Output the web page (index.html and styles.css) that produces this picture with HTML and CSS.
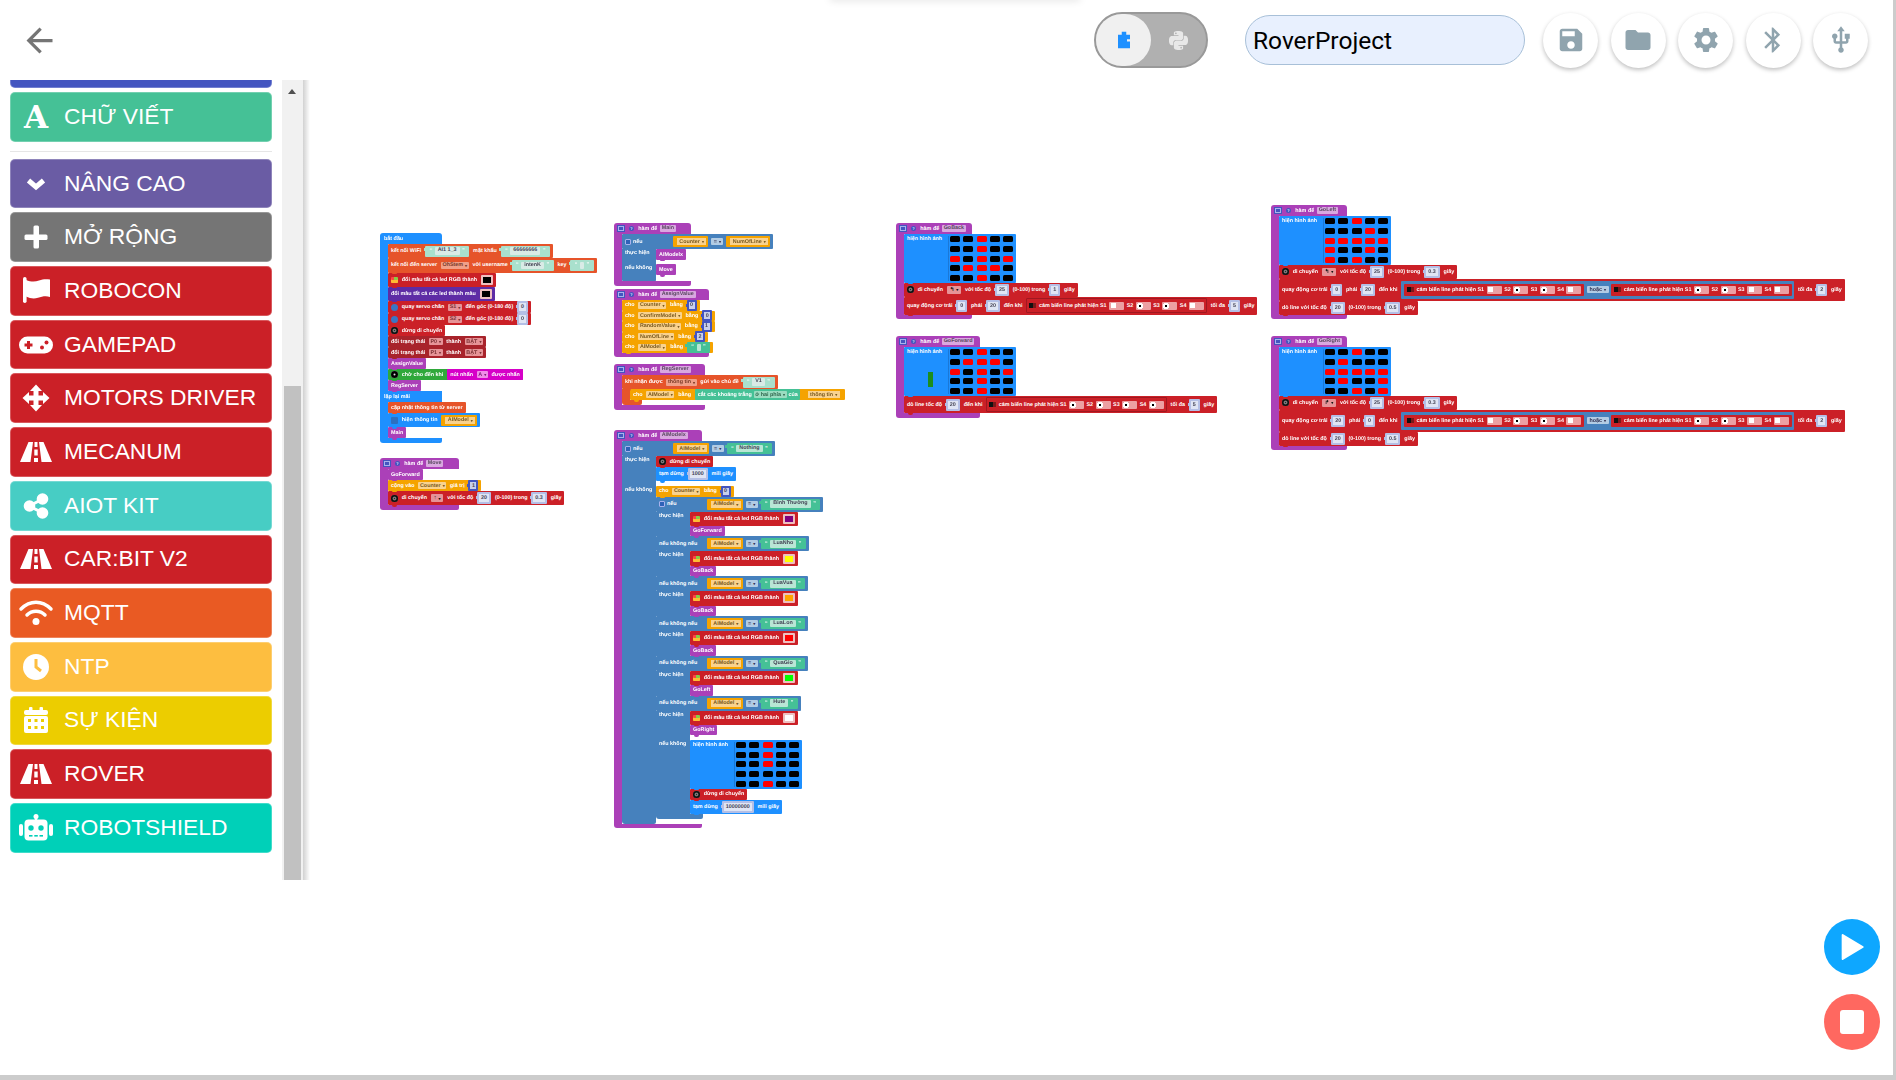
FILE: index.html
```html
<!DOCTYPE html>
<html>
<head>
  <meta charset="utf-8">
  <title>RoverProject</title>
  <link rel="stylesheet" href="styles.css">
</head>
<body>
  <div class="top-hint"></div>

  <header class="topbar">
    <button class="back-btn">
      <svg viewBox="0 0 24 24"><path d="M20 11H7.83l5.59-5.59L12 4l-8 8 8 8 1.41-1.41L7.83 13H20v-2z"/></svg>
    </button>
    <div class="mode-toggle">
      <div class="mode-knob">
        <svg viewBox="0 0 24 24"><path d="M9 1h6v4h5v6h-4v3h4v9H4V5h5z"/></svg>
      </div>
      <div class="mode-other">
        <svg viewBox="0 0 24 24"><path d="M14.25.18l.9.2.73.26.59.3.45.32.34.34.25.34.16.33.1.3.04.26.02.2-.01.13V8.5l-.05.63-.13.55-.21.46-.26.38-.3.31-.33.25-.35.19-.35.14-.33.1-.3.07-.26.04-.21.02H8.77l-.69.05-.59.14-.5.22-.41.27-.33.32-.27.35-.2.36-.15.37-.1.35-.07.32-.04.27-.02.21v3.06H3.17l-.21-.03-.28-.07-.32-.12-.35-.18-.36-.26-.36-.36-.35-.46-.32-.59-.28-.73-.21-.88-.14-1.05-.05-1.23.06-1.22.16-1.04.24-.87.32-.71.36-.57.4-.44.42-.33.42-.24.4-.16.36-.1.32-.05.24-.01h.16l.06.01h8.16v-.83H6.18l-.01-2.75-.02-.37.05-.34.11-.31.17-.28.25-.26.31-.23.38-.2.44-.18.51-.15.58-.12.64-.1.71-.06.77-.04.84-.02 1.27.05zm-6.3 1.98l-.23.33-.08.41.08.41.23.34.33.22.41.09.41-.09.33-.22.23-.34.08-.41-.08-.41-.23-.33-.33-.22-.41-.09-.41.09zm13.09 3.95l.28.06.32.12.35.18.36.27.36.35.35.47.32.59.28.73.21.88.14 1.04.05 1.23-.06 1.23-.16 1.04-.24.86-.32.71-.36.57-.4.45-.42.33-.42.24-.4.16-.36.09-.32.05-.24.02-.16-.01h-8.22v.82h5.84l.01 2.76.02.36-.05.34-.11.31-.17.29-.25.25-.31.24-.38.2-.44.17-.51.15-.58.13-.64.09-.71.07-.77.04-.84.01-1.27-.04-1.07-.14-.9-.2-.73-.25-.59-.3-.45-.33-.34-.34-.25-.34-.16-.33-.1-.3-.04-.25-.02-.2.01-.13v-5.34l.05-.64.13-.54.21-.46.26-.38.3-.32.33-.24.35-.2.35-.14.33-.1.3-.06.26-.04.21-.02.13-.01h5.84l.69-.05.59-.14.5-.21.41-.28.33-.32.27-.35.2-.36.15-.36.1-.35.07-.32.04-.28.02-.21V6.07h2.09l.14.01zm-6.47 14.25l-.23.33-.08.41.08.41.23.33.33.23.41.08.41-.08.33-.23.23-.33.08-.41-.08-.41-.23-.33-.33-.23-.41-.08-.41.08z"/></svg>
      </div>
    </div>
    <input class="project-name" type="text" value="RoverProject">
    <div class="tools">
      <button class="tool-btn"><svg viewBox="0 0 24 24"><path d="M17 3H5c-1.11 0-2 .9-2 2v14c0 1.1.89 2 2 2h14c1.1 0 2-.9 2-2V7l-4-4zm-5 16c-1.66 0-3-1.34-3-3s1.34-3 3-3 3 1.34 3 3-1.34 3-3 3zm3-10H5V5h10v4z"/></svg></button>
      <button class="tool-btn"><svg viewBox="0 0 24 24"><path d="M10 4H4c-1.1 0-1.99.9-1.99 2L2 18c0 1.1.9 2 2 2h16c1.1 0 2-.9 2-2V8c0-1.1-.9-2-2-2h-8l-2-2z"/></svg></button>
      <button class="tool-btn"><svg viewBox="0 0 24 24"><path d="M19.14 12.94c.04-.3.06-.61.06-.94 0-.32-.02-.64-.07-.94l2.03-1.58c.18-.14.23-.41.12-.61l-1.92-3.32c-.12-.22-.37-.29-.59-.22l-2.39.96c-.5-.38-1.03-.7-1.62-.94l-.36-2.54c-.04-.24-.24-.41-.48-.41h-3.84c-.24 0-.43.17-.47.41l-.36 2.54c-.59.24-1.13.57-1.62.94l-2.39-.96c-.22-.08-.47 0-.59.22L2.74 8.87c-.12.21-.08.47.12.61l2.03 1.58c-.05.3-.09.63-.09.94s.02.64.07.94l-2.03 1.58c-.18.14-.23.41-.12.61l1.92 3.32c.12.22.37.29.59.22l2.39-.96c.5.38 1.03.7 1.62.94l.36 2.54c.05.24.24.41.48.41h3.84c.24 0 .44-.17.47-.41l.36-2.54c.59-.24 1.13-.56 1.62-.94l2.39.96c.22.08.47 0 .59-.22l1.92-3.32c.12-.22.07-.47-.12-.61l-2.01-1.58zM12 15.6c-1.98 0-3.6-1.62-3.6-3.6s1.62-3.6 3.6-3.6 3.6 1.62 3.6 3.6-1.62 3.6-3.6 3.6z"/></svg></button>
      <button class="tool-btn"><svg viewBox="0 0 24 24"><path d="M17.71 7.71L12 2h-1v7.59L6.41 5 5 6.41 10.59 12 5 17.59 6.41 19 11 14.41V22h1l5.71-5.71-4.3-4.29 4.3-4.29zM13 5.83l1.88 1.88L13 9.59V5.83zm1.88 10.46L13 18.17v-3.76l1.88 1.88z"/></svg></button>
      <button class="tool-btn"><svg viewBox="0 0 24 24"><path d="M15 7v4h1v2h-3V5h2l-3-4-3 4h2v8H8v-2.07c.7-.37 1.2-1.08 1.2-1.93 0-1.21-.99-2.2-2.2-2.2-1.21 0-2.2.99-2.2 2.2 0 .85.5 1.56 1.2 1.93V13c0 1.11.89 2 2 2h3v3.05c-.71.37-1.2 1.1-1.2 1.95 0 1.22.99 2.2 2.2 2.2 1.21 0 2.2-.98 2.2-2.2 0-.85-.49-1.58-1.2-1.95V15h3c1.11 0 2-.89 2-2v-2h1V7h-4z"/></svg></button>
    </div>
  </header>

  <main class="editor">
    <aside class="toolbox">
      <div class="categories">
        <div class="cat cat-clipped"></div>
        <div class="cat cat-text">
          <span class="cat-icon cat-letter">A</span><span>CHỮ VIẾT</span>
        </div>
        <hr class="cat-sep">
        <div class="cat cat-advanced">
          <span class="cat-icon"><svg viewBox="0 0 36 36"><path d="M10.500 14.500l7.500 6.500 7.500-6.500" fill="none" stroke="#fff" stroke-width="5"/></svg></span><span>NÂNG CAO</span>
        </div>
        <div class="cat cat-extend">
          <span class="cat-icon"><svg viewBox="0 0 36 36"><rect x="15.500" y="6.500" width="5.500" height="23" rx="1.500"/><rect x="6.500" y="15.500" width="23" height="5.500" rx="1.500"/></svg></span><span>MỞ RỘNG</span>
        </div>
        <div class="cat cat-red">
          <span class="cat-icon"><svg viewBox="0 0 36 36"><rect x="5" y="4" width="3.600" height="26" rx="1.800"/><path d="M8 7c5 2 9 2 13 .5s7-1.500 11-1V24c-4-1.500-8-.5-12 .8s-8 .7-12-1.300z"/></svg></span><span>ROBOCON</span>
        </div>
        <div class="cat cat-red">
          <span class="cat-icon"><svg viewBox="0 0 36 36"><rect x="1" y="9.500" width="34" height="17" rx="8.500"/><rect x="6.500" y="16.500" width="8" height="3" fill="#cb2027"/><rect x="9" y="14" width="3" height="8" fill="#cb2027"/><circle cx="24" cy="20.500" r="2" fill="#cb2027"/><circle cx="28.500" cy="15.500" r="2" fill="#cb2027"/></svg></span><span>GAMEPAD</span>
        </div>
        <div class="cat cat-red">
          <span class="cat-icon"><svg viewBox="0 0 36 36"><path d="M18 4.500l6 6.500h-3.500v4.500H25V12l6.500 6-6.500 6v-3.500h-4.500V25H24l-6 6.500-6-6.500h3.500v-4.500H11V24l-6.500-6L11 12v3.500h4.500V11H12z"/></svg></span><span>MOTORS DRIVER</span>
        </div>
        <div class="cat cat-red">
          <span class="cat-icon"><svg viewBox="0 0 36 36"><path d="M10.500 8H15l-2.500 20H2zM21 8h4.500L34 28H23.500z"/><path d="M16.500 8h3v5h-3zM16.300 15.500h3.400v6h-3.400zM16 24h4v4h-4z"/></svg></span><span>MECANUM</span>
        </div>
        <div class="cat cat-aiot">
          <span class="cat-icon"><svg viewBox="0 0 36 36"><path d="M24.500 11L11.500 18l13 7" fill="none" stroke="#fff" stroke-width="3"/><circle cx="24.500" cy="11" r="5.800"/><circle cx="11.500" cy="18" r="5.800"/><circle cx="24.500" cy="25" r="5.800"/></svg></span><span>AIOT KIT</span>
        </div>
        <div class="cat cat-red">
          <span class="cat-icon"><svg viewBox="0 0 36 36"><path d="M10.500 8H15l-2.500 20H2zM21 8h4.500L34 28H23.500z"/><path d="M16.500 8h3v5h-3zM16.300 15.500h3.400v6h-3.400zM16 24h4v4h-4z"/></svg></span><span>CAR:BIT V2</span>
        </div>
        <div class="cat cat-mqtt">
          <span class="cat-icon"><svg viewBox="0 0 36 36"><path d="M3 14C12 5 24 5 33 14M9 20c5-5 13-5 18 0" fill="none" stroke="#fff" stroke-width="3.500" stroke-linecap="round"/><circle cx="18" cy="26.500" r="3.500"/></svg></span><span>MQTT</span>
        </div>
        <div class="cat cat-ntp">
          <span class="cat-icon"><svg viewBox="0 0 36 36"><circle cx="18" cy="18" r="13"/><path d="M18 10v8l5 4" fill="none" stroke="#fdbe40" stroke-width="3"/></svg></span><span>NTP</span>
        </div>
        <div class="cat cat-event">
          <span class="cat-icon"><svg viewBox="0 0 36 36"><rect x="6" y="8" width="24" height="5" rx="2"/><rect x="11" y="5" width="3.500" height="5" rx="1"/><rect x="21.500" y="5" width="3.500" height="5" rx="1"/><rect x="6" y="14" width="24" height="17" rx="2"/><g fill="#eccd00"><rect x="10" y="17" width="3" height="3"/><rect x="16.500" y="17" width="3" height="3"/><rect x="23" y="17" width="3" height="3"/><rect x="10" y="24" width="3" height="3"/><rect x="16.500" y="24" width="3" height="3"/><rect x="23" y="24" width="3" height="3"/></g></svg></span><span>SỰ KIỆN</span>
        </div>
        <div class="cat cat-red">
          <span class="cat-icon"><svg viewBox="0 0 36 36"><path d="M10.500 8H15l-2.500 20H2zM21 8h4.500L34 28H23.500z"/><path d="M16.500 8h3v5h-3zM16.300 15.500h3.400v6h-3.400zM16 24h4v4h-4z"/></svg></span><span>ROVER</span>
        </div>
        <div class="cat cat-shield">
          <span class="cat-icon"><svg viewBox="0 0 36 36"><circle cx="18" cy="6.500" r="2.500"/><rect x="16.800" y="6" width="2.400" height="5"/><rect x="6.500" y="9.500" width="23" height="21" rx="4"/><rect x="1" y="14" width="4" height="12" rx="2"/><rect x="31" y="14" width="4" height="12" rx="2"/><g fill="#00d0b8"><circle cx="13" cy="18" r="2.700"/><circle cx="23" cy="18" r="2.700"/><rect x="11" y="25" width="3.500" height="1.600"/><rect x="16.300" y="25" width="3.500" height="1.600"/><rect x="21.500" y="25" width="3.500" height="1.600"/></g></svg></span><span>ROBOTSHIELD</span>
        </div>
      </div>
      <div class="toolbox-scroll">
        <span class="scroll-up"></span>
        <div class="scroll-thumb"></div>
      </div>
    </aside>

    <section class="workspace">

      <!-- bat dau / lap lai mai -->
      <div class="stack s-start">
        <div class="hat blue w-start">bắt đầu</div>
        <div class="c-body edge-blue">
          <div class="b tall orn">kết nối WiFi <span class="str">“<i>AI1 1_3</i>”</span> mật khẩu <span class="str">“<i>66666666</i>”</span></div>
          <div class="b tall orn">kết nối đến server <span class="dd fld-o">OhStem</span> với username <span class="str">“<i>intenK</i>”</span> key <span class="str">“<i class="empty"></i>”</span></div>
          <div class="b tall red"><span class="ico rgb"></span>đổi màu tất cả led RGB thành <span class="sw bk"></span></div>
          <div class="b tall dpur">đổi màu tất cả các led thành màu <span class="sw bk"></span></div>
          <div class="b mid red"><span class="ico servo"></span>quay servo chân <span class="dd fld-r">S1</span> đến góc (0-180 độ) <span class="num">0</span></div>
          <div class="b mid red"><span class="ico servo"></span>quay servo chân <span class="dd fld-r">S2</span> đến góc (0-180 độ) <span class="num">0</span></div>
          <div class="b red"><span class="ico stop"></span>dừng di chuyển</div>
          <div class="b dred">đổi trạng thái <span class="dd fld-r">P0</span> thành <span class="dd fld-r">BẬT</span></div>
          <div class="b dred">đổi trạng thái <span class="dd fld-r">P1</span> thành <span class="dd fld-r">BẬT</span></div>
          <div class="b pur">AssignValue</div>
          <div class="b grn"><span class="ico pause"></span>chờ cho đến khi <span class="mag-in">nút nhấn <span class="dd fld-m">A</span> được nhấn</span></div>
          <div class="b pur">RegServer</div>
        </div>
        <div class="hat blue w-start square">lặp lại mãi</div>
        <div class="c-body edge-blue">
          <div class="b orn">cập nhật thông tin từ server</div>
          <div class="b tall blue"><span class="ico lcd"></span>hiện thông tin <span class="var">AIModel</span></div>
          <div class="b pur">Main</div>
        </div>
        <div class="foot blue w-start"></div>
      </div>

      <!-- Move -->
      <div class="stack s-move">
        <div class="hat pur w-move"><span class="collapse"></span><span class="fn-ic">?</span>hàm để <span class="fn-name">Move</span></div>
        <div class="c-body edge-pur">
          <div class="b pur">GoForward</div>
          <div class="b amb">cộng vào <span class="dd fld-a">Counter</span> giá trị <span class="num solid">1</span></div>
          <div class="b tall red"><span class="ico stop"></span>di chuyển <span class="dd fld-r dk">↑</span> với tốc độ <span class="num">20</span> (0-100) trong <span class="num">0.3</span> giây</div>
        </div>
        <div class="foot pur w-move"></div>
      </div>

      <!-- Main -->
      <div class="stack s-main">
        <div class="hat pur w-main"><span class="collapse"></span><span class="fn-ic">?</span>hàm để <span class="fn-name">Main</span></div>
        <div class="c-body edge-pur">
          <div class="if">
            <div class="b if-head"><span class="lab"><span class="gear"></span>nếu</span><span class="var">Counter</span><span class="dd op">=</span><span class="var">NumOfLine</span></div>
            <div class="do do-gap"><span class="lab">thực hiện</span><div class="do-body"><div class="b pur">AIModelx</div></div></div>
            <div class="do do-gap"><span class="lab">nếu không</span><div class="do-body"><div class="b pur">Move</div></div></div>
            <div class="if-foot thin"></div>
          </div>
        </div>
        <div class="foot pur w-main"></div>
      </div>

      <!-- AssignValue -->
      <div class="stack s-assign">
        <div class="hat pur w-assign"><span class="collapse"></span><span class="fn-ic">?</span>hàm để <span class="fn-name">AssignValue</span></div>
        <div class="c-body edge-pur">
          <div class="b amb">cho <span class="dd fld-a">Counter</span> bằng <span class="num solid">0</span></div>
          <div class="b amb">cho <span class="dd fld-a">ConfirmModel</span> bằng <span class="num solid">0</span></div>
          <div class="b amb">cho <span class="dd fld-a">RandomValue</span> bằng <span class="num solid">1</span></div>
          <div class="b amb">cho <span class="dd fld-a">NumOfLine</span> bằng <span class="num solid">2</span></div>
          <div class="b amb">cho <span class="dd fld-a">AIModel</span> bằng <span class="str solid">“<i class="empty"></i>”</span></div>
        </div>
        <div class="foot pur w-assign"></div>
      </div>

      <!-- RegServer -->
      <div class="stack s-reg">
        <div class="hat pur w-reg"><span class="collapse"></span><span class="fn-ic">?</span>hàm để <span class="fn-name">RegServer</span></div>
        <div class="c-body edge-pur">
          <div class="b tall orn">khi nhận được <span class="dd fld-o">thông tin</span> gửi vào chủ đề <span class="str">“<i>V1</i>”</span></div>
          <div class="c-body edge-orn">
            <div class="b amb">cho <span class="dd fld-a">AIModel</span> bằng <span class="trim">cắt các khoảng trắng <span class="dd fld-g">ở hai phía</span> của</span><span class="var">thông tin</span></div>
          </div>
          <div class="foot orn w-reg-in"></div>
        </div>
        <div class="foot pur w-reg"></div>
      </div>

      <!-- AIModelx -->
      <div class="stack s-aimodel">
        <div class="hat pur w-aimodel"><span class="collapse"></span><span class="fn-ic">?</span>hàm để <span class="fn-name">AIModelx</span></div>
        <div class="c-body edge-pur">
          <div class="if">
            <div class="b if-head"><span class="lab"><span class="gear"></span>nếu</span><span class="var">AIModel</span><span class="dd op">=</span><span class="str solid">“<i>Nothing</i>”</span></div>
            <div class="do do-gap"><span class="lab">thực hiện</span><div class="do-body">
              <div class="b red"><span class="ico stop"></span>dừng di chuyển</div>
              <div class="b tall blue">tạm dừng <span class="num">1000</span> mili giây</div>
            </div></div>
            <div class="do"><span class="lab">nếu không</span><div class="do-body">
              <div class="b amb">cho <span class="dd fld-a">Counter</span> bằng <span class="num solid">0</span></div>
              <div class="if">
                <div class="b if-head"><span class="lab"><span class="gear"></span>nếu</span><span class="var">AIModel</span><span class="dd op">=</span><span class="str solid">“<i>Bình Thường</i>”</span></div>
                <div class="do"><span class="lab">thực hiện</span><div class="do-body">
                  <div class="b tall red"><span class="ico rgb"></span>đổi màu tất cả led RGB thành <span class="sw pu"></span></div>
                  <div class="b pur short">GoForward</div>
                </div></div>
                <div class="b if-head"><span class="lab">nếu không nếu</span><span class="var">AIModel</span><span class="dd op">=</span><span class="str solid">“<i>LuaNho</i>”</span></div>
                <div class="do"><span class="lab">thực hiện</span><div class="do-body">
                  <div class="b tall red"><span class="ico rgb"></span>đổi màu tất cả led RGB thành <span class="sw ye"></span></div>
                  <div class="b pur short">GoBack</div>
                </div></div>
                <div class="b if-head"><span class="lab">nếu không nếu</span><span class="var">AIModel</span><span class="dd op">=</span><span class="str solid">“<i>LuaVua</i>”</span></div>
                <div class="do"><span class="lab">thực hiện</span><div class="do-body">
                  <div class="b tall red"><span class="ico rgb"></span>đổi màu tất cả led RGB thành <span class="sw og"></span></div>
                  <div class="b pur short">GoBack</div>
                </div></div>
                <div class="b if-head"><span class="lab">nếu không nếu</span><span class="var">AIModel</span><span class="dd op">=</span><span class="str solid">“<i>LuaLon</i>”</span></div>
                <div class="do"><span class="lab">thực hiện</span><div class="do-body">
                  <div class="b tall red"><span class="ico rgb"></span>đổi màu tất cả led RGB thành <span class="sw rd"></span></div>
                  <div class="b pur short">GoBack</div>
                </div></div>
                <div class="b if-head"><span class="lab">nếu không nếu</span><span class="var">AIModel</span><span class="dd op">=</span><span class="str solid">“<i>QuaGio</i>”</span></div>
                <div class="do"><span class="lab">thực hiện</span><div class="do-body">
                  <div class="b tall red"><span class="ico rgb"></span>đổi màu tất cả led RGB thành <span class="sw gn"></span></div>
                  <div class="b pur short">GoLeft</div>
                </div></div>
                <div class="b if-head"><span class="lab">nếu không nếu</span><span class="var">AIModel</span><span class="dd op">=</span><span class="str solid">“<i>Hute</i>”</span></div>
                <div class="do do-gap"><span class="lab">thực hiện</span><div class="do-body">
                  <div class="b tall red"><span class="ico rgb"></span>đổi màu tất cả led RGB thành <span class="sw wh"></span></div>
                  <div class="b pur short">GoRight</div>
                </div></div>
                <div class="do"><span class="lab">nếu không</span><div class="do-body">
                  <div class="b led-row blue"><span class="led-label">hiện hình ảnh</span>
                    <div class="led"><i></i><i></i><i class="on"></i><i></i><i></i><i></i><i></i><i class="on"></i><i></i><i></i><i></i><i></i><i class="on"></i><i></i><i></i><i></i><i></i><i></i><i></i><i></i><i></i><i></i><i class="on"></i><i></i><i></i></div>
                  </div>
                  <div class="b red"><span class="ico stop"></span>dừng di chuyển</div>
                  <div class="b tall blue">tạm dừng <span class="num">10000000</span> mili giây</div>
                </div></div>
                <div class="if-foot w-if-in"></div>
              </div>
            </div></div>
            <div class="if-foot"></div>
          </div>
        </div>
        <div class="foot pur w-aimodel"></div>
      </div>

      <!-- GoBack -->
      <div class="stack s-goback">
        <div class="hat pur w-goback"><span class="collapse"></span><span class="fn-ic">?</span>hàm để <span class="fn-name">GoBack</span></div>
        <div class="c-body edge-pur">
          <div class="b led-row blue"><span class="led-label">hiện hình ảnh</span>
            <div class="led"><i></i><i></i><i class="on"></i><i></i><i></i><i></i><i></i><i class="on"></i><i></i><i></i><i class="on"></i><i></i><i class="on"></i><i></i><i class="on"></i><i></i><i class="on"></i><i class="on"></i><i class="on"></i><i></i><i></i><i></i><i class="on"></i><i></i><i></i></div>
          </div>
          <div class="b tall red"><span class="ico stop"></span>di chuyển <span class="dd fld-r dk">↰</span> với tốc độ <span class="num">25</span> (0-100) trong <span class="num">1</span> giây</div>
          <div class="b sens-row red">quay động cơ trái <span class="num">0</span> phải <span class="num">20</span> đến khi
            <span class="sensor"><span class="ico flag"></span>cảm biến line phát hiện S1 <span class="chk off"></span> S2 <span class="chk"></span> S3 <span class="chk"></span> S4 <span class="chk off"></span></span>
            tối đa <span class="num">5</span> giây</div>
        </div>
        <div class="foot pur w-goback"></div>
      </div>

      <!-- GoForward -->
      <div class="stack s-gofwd">
        <div class="hat pur w-gofwd"><span class="collapse"></span><span class="fn-ic">?</span>hàm để <span class="fn-name">GoForward</span></div>
        <div class="c-body edge-pur">
          <div class="b led-row blue"><span class="led-label">hiện hình ảnh</span><span class="green-bar"></span>
            <div class="led"><i></i><i></i><i class="on"></i><i></i><i></i><i></i><i class="on"></i><i class="on"></i><i class="on"></i><i></i><i class="on"></i><i></i><i class="on"></i><i></i><i class="on"></i><i></i><i></i><i class="on"></i><i></i><i></i><i></i><i></i><i class="on"></i><i></i><i></i></div>
          </div>
          <div class="b sens-row red">dò line tốc độ <span class="num">20</span> đến khi
            <span class="sensor"><span class="ico flag"></span>cảm biến line phát hiện S1 <span class="chk"></span> S2 <span class="chk"></span> S3 <span class="chk"></span> S4 <span class="chk"></span></span>
            tối đa <span class="num">5</span> giây</div>
        </div>
        <div class="foot pur w-gofwd"></div>
      </div>

      <!-- GoLeft -->
      <div class="stack s-goleft">
        <div class="hat pur w-goback"><span class="collapse"></span><span class="fn-ic">?</span>hàm để <span class="fn-name">GoLeft</span></div>
        <div class="c-body edge-pur">
          <div class="b led-row blue"><span class="led-label">hiện hình ảnh</span>
            <div class="led"><i></i><i></i><i class="on"></i><i></i><i></i><i></i><i></i><i></i><i class="on"></i><i></i><i class="on"></i><i class="on"></i><i class="on"></i><i class="on"></i><i class="on"></i><i class="on"></i><i></i><i></i><i class="on"></i><i></i><i class="on"></i><i></i><i class="on"></i><i></i><i></i></div>
          </div>
          <div class="b tall red"><span class="ico stop"></span>di chuyển <span class="dd fld-r dk">↰</span> với tốc độ <span class="num">25</span> (0-100) trong <span class="num">0.3</span> giây</div>
          <div class="b wide red">quay động cơ trái <span class="num">0</span> phải <span class="num">20</span> đến khi
            <span class="or-block">
              <span class="b red sens-b"><span class="ico flag"></span>cảm biến line phát hiện S1 <span class="chk off"></span> S2 <span class="chk"></span> S3 <span class="chk"></span> S4 <span class="chk off"></span></span>
              <span class="dd op">hoặc</span>
              <span class="b red sens-b"><span class="ico flag"></span>cảm biến line phát hiện S1 <span class="chk"></span> S2 <span class="chk"></span> S3 <span class="chk off"></span> S4 <span class="chk off"></span></span>
            </span>
            tối đa <span class="num">2</span> giây</div>
          <div class="b tall red">dò line với tốc độ <span class="num">20</span> (0-100) trong <span class="num">0.5</span> giây</div>
        </div>
        <div class="foot pur w-goback"></div>
      </div>

      <!-- GoRight -->
      <div class="stack s-goright">
        <div class="hat pur w-goright"><span class="collapse"></span><span class="fn-ic">?</span>hàm để <span class="fn-name">GoRight</span></div>
        <div class="c-body edge-pur">
          <div class="b led-row blue"><span class="led-label">hiện hình ảnh</span>
            <div class="led"><i></i><i></i><i class="on"></i><i></i><i></i><i></i><i class="on"></i><i></i><i></i><i></i><i class="on"></i><i class="on"></i><i class="on"></i><i class="on"></i><i class="on"></i><i></i><i class="on"></i><i></i><i></i><i class="on"></i><i></i><i></i><i class="on"></i><i></i><i class="on"></i></div>
          </div>
          <div class="b tall red"><span class="ico stop"></span>di chuyển <span class="dd fld-r dk">↱</span> với tốc độ <span class="num">25</span> (0-100) trong <span class="num">0.3</span> giây</div>
          <div class="b wide red">quay động cơ trái <span class="num">20</span> phải <span class="num">0</span> đến khi
            <span class="or-block">
              <span class="b red sens-b"><span class="ico flag"></span>cảm biến line phát hiện S1 <span class="chk off"></span> S2 <span class="chk"></span> S3 <span class="chk"></span> S4 <span class="chk off"></span></span>
              <span class="dd op">hoặc</span>
              <span class="b red sens-b"><span class="ico flag"></span>cảm biến line phát hiện S1 <span class="chk"></span> S2 <span class="chk"></span> S3 <span class="chk off"></span> S4 <span class="chk off"></span></span>
            </span>
            tối đa <span class="num">2</span> giây</div>
          <div class="b tall red">dò line với tốc độ <span class="num">20</span> (0-100) trong <span class="num">0.5</span> giây</div>
        </div>
        <div class="foot pur w-goright"></div>
      </div>

    </section>
  </main>

  <button class="fab fab-play"><svg viewBox="0 0 24 24"><path d="M5 3l15 9-15 9z"/></svg></button>
  <button class="fab fab-stop"><span class="stop-square"></span></button>
</body>
</html>
```

FILE: styles.css
```css
html, body {
  margin: 0;
  height: 100%;
}

body {
  width: 1896px;
  height: 1080px;
  box-sizing: border-box;
  border-right: 3px solid #ccc;
  border-bottom: 5px solid #ccc;
  background-color: #fff;
  font-family: "Liberation Sans", Arial, sans-serif;
  overflow: hidden;
  position: relative;
}

button {
  border: none;
  padding: 0;
  background: none;
}

.top-hint {
  position: absolute;
  top: -2px;
  left: 830px;
  width: 250px;
  height: 2px;
  box-shadow: 0 0 7px rgba(0, 0, 0, 0.25);
}

/* top bar */
.topbar {
  height: 80px;
  display: flex;
  align-items: center;
  padding: 0 25px 0 20px;
}

.back-btn {
  width: 39px;
  height: 39px;
}
.back-btn svg {
  width: 39px;
  height: 39px;
  fill: #757575;
  display: block;
}

.mode-toggle {
  margin-left: auto;
  width: 114px;
  height: 56px;
  box-sizing: border-box;
  border: 2px solid #999;
  border-radius: 28px;
  background-color: #b0b0b0;
  display: flex;
  align-items: center;
}
.mode-knob {
  width: 55px;
  height: 52px;
  border-radius: 26px;
  background-color: #f0f0f0;
  display: flex;
  align-items: center;
  justify-content: center;
}
.mode-knob svg {
  width: 18px;
  height: 18px;
  fill: #1e90ff;
}
.mode-other {
  flex: 1;
  display: flex;
  align-items: center;
  justify-content: center;
}
.mode-other svg {
  width: 19px;
  height: 19px;
  fill: #e8e8e8;
}

.project-name {
  width: 280px;
  height: 50px;
  box-sizing: border-box;
  margin-left: 37px;
  padding: 0 7px;
  border: 1px solid #a8c0d8;
  border-radius: 25px;
  background-color: #e8f0fe;
  font-family: Roboto, sans-serif;
  font-size: 24.5px;
  color: #000;
  outline: none;
}

.tools {
  display: flex;
  gap: 12.5px;
  margin-left: 18px;
}
.tool-btn {
  width: 55px;
  height: 55px;
  border-radius: 50%;
  background-color: #fff;
  box-shadow: 0 2px 4px rgba(0, 0, 0, 0.25);
  display: flex;
  align-items: center;
  justify-content: center;
}
.tool-btn svg {
  width: 30px;
  height: 30px;
  fill: #90a4ae;
}

/* toolbox */
.editor {
  display: flex;
  height: 800px;
}

.toolbox {
  display: flex;
  flex: 0 0 303px;
}

.categories {
  width: 262px;
  padding: 0 10px;
  overflow: hidden;
  display: flex;
  flex-direction: column;
  gap: 4px;
}

.cat {
  flex: 0 0 49.7px;
  box-sizing: border-box;
  border: 1px solid rgba(255, 255, 255, 0.25);
  border-radius: 5px;
  display: flex;
  align-items: center;
  padding: 0 0 1px 7px;
  color: #fff;
  font-size: 22.8px;
  white-space: nowrap;
}
.cat-clipped {
  margin-top: -41.7px;
  background-color: #4355c0;
}
.cat-text { background-color: #45c196; }
.cat-advanced { background-color: #6a5ca4; }
.cat-extend { background-color: #757575; }
.cat-red { background-color: #cb2027; }
.cat-aiot { background-color: #47cdc4; }
.cat-mqtt { background-color: #e95a23; }
.cat-ntp { background-color: #fdbe40; }
.cat-event { background-color: #eccd00; }
.cat-shield { background-color: #00d0b8; }

.cat-icon {
  flex: 0 0 36px;
  height: 36px;
  margin-right: 10px;
  margin-bottom: -1px;
  display: flex;
  align-items: center;
  justify-content: center;
}
.cat-icon svg {
  width: 36px;
  height: 36px;
  fill: #fff;
  display: block;
}
.cat-letter {
  font-family: "DejaVu Serif", serif;
  font-weight: bold;
  font-size: 31px;
}

.cat-sep {
  width: 100%;
  flex: 0 0 1px;
  margin: 5.5px 0 2.5px;
  border: none;
  background-color: #e6e6e6;
}

.toolbox-scroll {
  width: 21px;
  margin-left: auto;
  background-color: #f1f1f1;
  position: relative;
}
.toolbox-scroll::after {
  content: "";
  position: absolute;
  top: 0;
  bottom: 0;
  left: 100%;
  width: 7px;
  background: linear-gradient(90deg, rgba(0, 0, 0, 0.18), rgba(0, 0, 0, 0));
}
.scroll-up {
  position: absolute;
  top: 9px;
  left: 6px;
  border-left: 4.5px solid transparent;
  border-right: 4.5px solid transparent;
  border-bottom: 5px solid #505050;
}
.scroll-thumb {
  position: absolute;
  top: 306px;
  bottom: 0;
  left: 2px;
  width: 17px;
  background-color: #c1c1c1;
}

/* workspace, block stacks sit on a free canvas */
.workspace {
  flex: 1;
  position: relative;
}

.stack {
  position: absolute;
  display: flex;
  flex-direction: column;
  align-items: flex-start;
  font-size: 5.4px;
  font-weight: bold;
  color: #fff;
  text-rendering: geometricPrecision;
  white-space: nowrap;
  filter: blur(0.35px);
}

.s-start { left: 77px; top: 153px; }
.s-move { left: 77px; top: 378px; }
.s-main { left: 311px; top: 143px; }
.s-assign { left: 311px; top: 209px; }
.s-reg { left: 311px; top: 284px; }
.s-aimodel { left: 311px; top: 350px; }
.s-goback { left: 593px; top: 143px; }
.s-gofwd { left: 593px; top: 256px; }
.s-goleft { left: 968px; top: 125px; }
.s-goright { left: 968px; top: 256px; }

.blue { background-color: #1e90ff; }
.orn { background-color: #e6542a; }
.red { background-color: #cb2027; }
.dpur { background-color: #5e2ca5; }
.dred { background-color: #a8232b; }
.pur { background-color: #ab40b8; }
.grn { background-color: #2fa83a; }
.amb { background-color: #f5a300; }

.hat {
  height: 11px;
  padding-left: 4px;
  box-sizing: border-box;
  border-radius: 3px 3px 0 0;
  display: flex;
  align-items: center;
}
.hat.square { border-radius: 0; }

.w-start { width: 62px; }
.w-move { width: 79px; }
.w-main { width: 77px; }
.w-assign { width: 95px; }
.w-reg { width: 91px; }
.w-aimodel { width: 88px; }
.w-goback { width: 76px; }
.w-gofwd { width: 84px; }
.w-goright { width: 76px; }
.w-reg-in { width: 20px; }
.w-if-in { width: 47px; }

.foot {
  height: 4.5px;
  border-radius: 0 0 2px 3px;
}
.c-body > .foot { height: 5px; }

.c-body {
  display: flex;
  flex-direction: column;
  align-items: flex-start;
  border-left: 8px solid;
}
.edge-blue { border-left-color: #1e90ff; }
.edge-pur { border-left-color: #ab40b8; }
.edge-orn { border-left-color: #e6542a; }

.b {
  position: relative;
  display: flex;
  align-items: center;
  gap: 3.8px;
  height: 11px;
  padding: 0 3px;
  box-sizing: border-box;
  border-radius: 1px;
}
.b.mid { height: 12px; }
.b.tall { height: 14.3px; }
.b.wide { height: 21.7px; }
.b.short { height: 10.5px; }
.b.sens-row { height: 17.7px; }
.b::after {
  content: "";
  position: absolute;
  left: 4px;
  bottom: -1.3px;
  width: 5px;
  height: 1.3px;
  border-radius: 0 0 2px 2px;
  background-color: inherit;
  z-index: 1;
}
.s-assign .b { height: 10.55px; }

/* fields */
.dd {
  display: inline-flex;
  align-items: center;
  height: 7px;
  padding: 0 1.5px;
  border-radius: 1px;
}
.dd::after {
  content: "▾";
  margin-left: 2px;
  font-size: 4px;
}
.fld-o { background-color: #f0a088; color: #7a3a28; }
.fld-r { background-color: #e69397; color: #7a3034; }
.fld-r.dk { color: #111; padding: 0 3px; height: 8px; }
.fld-a { background-color: #f9d28e; color: #7a5a20; }
.fld-g { background-color: #9adcc0; color: #33684f; }
.fld-m { background-color: #f08ce8; color: #7a2074; }
.op { background-color: #b2cce4; color: #335; padding: 0 2.5px; }

.var {
  display: inline-flex;
  align-items: center;
  height: 7px;
  padding: 0 2.5px;
  border: 2px solid #f5a300;
  border-left-width: 4px;
  background-color: #f9d28e;
  border-radius: 1px;
  color: #7a5a20;
}
.var::after {
  content: "▾";
  margin-left: 2px;
  font-size: 4px;
}

.str {
  position: relative;
  display: inline-flex;
  align-items: center;
  gap: 2.5px;
  height: 11px;
  padding: 0 4.5px;
  background-color: #a9e0cd;
  border-radius: 1px;
  color: #fff;
}
.str.solid { background-color: #45c196; }
.str i {
  font-style: normal;
  padding: 0 3px;
  height: 7.5px;
  line-height: 7.5px;
  background-color: #d9ebe6;
  color: #445;
  border-radius: 1px;
}
.str.solid i { background-color: #b9e6d5; }
.str i.empty { width: 4px; padding: 0; }

.num {
  position: relative;
  display: inline-flex;
  align-items: center;
  height: 8px;
  padding: 0 2px;
  border: 2px solid #b4bfe6;
  background-color: #e0e5f4;
  border-radius: 1px;
  color: #445;
}
.num.solid {
  border-color: #4355c0;
  background-color: #c8cfec;
  height: 7px;
  padding: 0 1.5px;
}

/* small puzzle tab left of an input */
.num::before, .str::before {
  content: "";
  position: absolute;
  left: -3px;
  top: 2px;
  width: 1.5px;
  height: 3px;
  background-color: #b4bfe6;
}
.num.solid::before { background-color: #4355c0; }
.str::before { left: -1.5px; background-color: #a9e0cd; }
.str.solid::before { background-color: #45c196; }

.sw {
  width: 8px;
  height: 6px;
  border: 2px solid #eec0c0;
  border-radius: 1px;
}
.sw.bk { background-color: #000; }
.sw.pu { background-color: #800080; }
.sw.ye { background-color: #ff0; }
.sw.og { background-color: #ffa500; }
.sw.rd { background-color: #f00; }
.sw.gn { background-color: #0f0; }
.sw.wh { background-color: #fff; }

.ico {
  flex: 0 0 7px;
  width: 7px;
  height: 7px;
  border-radius: 50%;
}
.ico.rgb {
  border-radius: 1px;
  height: 6px;
  background: linear-gradient(90deg, #f44 50%, #8c4 50%);
  box-shadow: inset 0 -3px 0 #fb3;
}
.ico.servo { background-color: #3a76c4; }
.ico.stop { background-color: #0d0d0d; box-shadow: inset 0 0 0 1.5px #0d0d0d, inset 0 0 0 3px #777; }
.ico.pause { background-color: #000; box-shadow: inset 0 0 0 2.5px #000, inset 0 0 0 3.5px #ddd; }
.ico.lcd { background-color: #2e6fc0; border-radius: 1px; }
.ico.flag {
  height: 5px;
  border-radius: 0;
  background: linear-gradient(90deg, #111 60%, #7a1a1a 60%);
}

.mag-in, .trim {
  display: flex;
  align-items: center;
  height: 11px;
  border-radius: 1px;
}
.mag-in {
  gap: 3.8px;
  padding: 0 3px;
  margin-right: -3px;
  background-color: #d600c8;
}
.trim {
  gap: 2px;
  padding: 0 2px 0 3px;
  background-color: #45c196;
}

.collapse {
  width: 3.8px;
  height: 3.8px;
  border: 0.8px solid #a8b2ec;
  background-color: #4355c0;
  outline: 0.6px solid #4355c0;
}
.fn-ic {
  width: 5.5px;
  height: 5.5px;
  line-height: 5.5px;
  border-radius: 50%;
  background-color: #4355c0;
  color: #dfe3f5;
  font-size: 4px;
  text-align: center;
  margin: 0 4px 0 5px;
}
.fn-name {
  margin-left: 2.5px;
  padding: 0 2px;
  height: 6.5px;
  line-height: 6.5px;
  background-color: #d9a8e0;
  color: #5a4a60;
  border-radius: 1px;
}

/* if blocks */
.if {
  display: flex;
  flex-direction: column;
  align-items: flex-start;
}
.if-head {
  height: 15px;
  background-color: #4681bd;
  padding: 0 3px 0 0;
  gap: 2.8px;
}
.if-head::after { display: none; }

.lab {
  flex: 0 0 auto;
  box-sizing: border-box;
  width: 34px;
  padding-left: 3px;
  padding-top: 1px;
  display: flex;
  align-items: flex-start;
  gap: 2px;
  background-color: #4681bd;
}
.if-head .lab {
  width: 48px;
  padding-top: 0;
  align-items: center;
  background: none;
}

.gear {
  width: 4px;
  height: 4px;
  border: 1px solid #a8b2ec;
  background-color: #2f62b8;
  border-radius: 1px;
}

.do {
  display: flex;
  align-items: stretch;
}
.do-body {
  display: flex;
  flex-direction: column;
  align-items: flex-start;
}
.do-gap > .do-body { margin-bottom: 4.4px; }

.if-foot {
  width: 34px;
  height: 5px;
  background-color: #4681bd;
  border-radius: 0 0 2px 3px;
}
.if-foot.thin { height: 1.7px; }
.if-foot.w-if-in { width: 47px; }

/* led matrix */
.led-row {
  height: 48.7px;
  align-items: flex-start;
  padding: 2px 0 0 3px;
  width: 112px;
  gap: 0;
}
.led-label {
  flex: 0 0 41px;
}
.led {
  display: grid;
  grid-template-columns: repeat(5, 10px);
  grid-auto-rows: 6px;
  column-gap: 3.3px;
  row-gap: 3.8px;
  padding-left: 1px;
  border-left: 1px solid #1a78d8;
}
.led i {
  background-color: #000;
  border-radius: 1.5px;
}
.led i.on { background-color: #f00; }

.green-bar {
  position: absolute;
  left: 24px;
  top: 25px;
  width: 5px;
  height: 15px;
  background-color: #1d8e1d;
}

/* line sensor */
.sensor {
  display: flex;
  align-items: center;
  gap: 2.5px;
  height: 13px;
  padding: 0 2px;
  border: 0.6px solid #a01820;
  border-radius: 1px;
}
.chk {
  display: inline-block;
  width: 15px;
  height: 8px;
  border-radius: 1px;
  background: radial-gradient(circle at 4px 4px, #000 1px, #fff 1.3px, #fff 3px, transparent 3px), #eca0a3;
}
.chk.off {
  background: linear-gradient(#fff, #fff) 1.5px 1.5px / 5px 5px no-repeat, #eca0a3;
}

.or-block {
  display: flex;
  align-items: center;
  gap: 2.6px;
  height: 18px;
  padding: 0 2.5px;
  background-color: #4681bd;
  border-radius: 1px;
}
.sens-b {
  height: 12px;
  gap: 2.5px;
}
.sens-b::after { display: none; }

/* run buttons */
.fab {
  position: absolute;
  left: 1824px;
  width: 56px;
  height: 56px;
  border-radius: 50%;
  display: flex;
  align-items: center;
  justify-content: center;
}
.fab-play {
  top: 919px;
  background-color: #0ea7ff;
}
.fab-play svg {
  width: 32px;
  height: 32px;
  fill: #fff;
  stroke: #fff;
  stroke-width: 1.5;
  stroke-linejoin: round;
  margin-left: -1px;
}
.fab-stop {
  top: 994px;
  background-color: #ff6860;
}
.stop-square {
  width: 24px;
  height: 24px;
  border-radius: 3px;
  background-color: #fff;
}
```
